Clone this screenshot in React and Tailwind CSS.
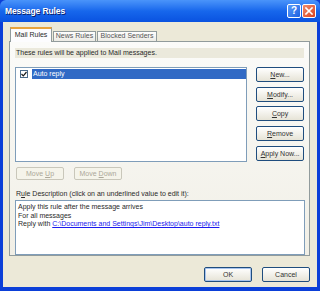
import React from 'react'

const XpButton = ({ children, disabled = false, className = '' }) => (
  <div
    className={`flex items-center justify-center rounded-[2px] border text-[7px] leading-none ${
      disabled
        ? 'border-[#c9c7ba] bg-[#f5f4ea] text-[#aca899]'
        : 'border-[#1f4d7e] bg-gradient-to-b from-[#ffffff] to-[#e6e3d6] text-[#333]'
    } ${className}`}
  >
    {children}
  </div>
)

const App = () => {
  const sideButtons = [
    { key: 'new', label: <><span className="underline">N</span>ew...</> },
    { key: 'modify', label: <><span className="underline">M</span>odify...</> },
    { key: 'copy', label: <><span className="underline">C</span>opy</> },
    { key: 'remove', label: <><span className="underline">R</span>emove</> },
    { key: 'apply', label: <><span className="underline">A</span>pply Now...</> }
  ]

  return (
    <div className="w-[320px] h-[291px] flex flex-col bg-[#0b3fd8] font-['Liberation_Sans',Arial,sans-serif] overflow-hidden">
      {/* title bar */}
      <div className="h-[22px] shrink-0 flex items-center pl-[5px] pr-[4px] bg-gradient-to-b from-[#4a94fa] via-[#1767ec] to-[#0a52e0] rounded-t-[6px]">
        <span className="text-white font-bold text-[8.5px] tracking-[-0.1px] [text-shadow:1px_1px_0_#0a1f6a]">Message Rules</span>
        <div className="ml-auto flex gap-[1px]">
          <div className="w-[14px] h-[14px] rounded-[2px] border border-white bg-gradient-to-br from-[#5b9cfb] to-[#1d5fe0] flex items-center justify-center text-white font-bold text-[10px] leading-none">?</div>
          <div className="w-[14px] h-[14px] rounded-[2px] border border-white bg-gradient-to-br from-[#f08a6a] to-[#d9421c] flex items-center justify-center">
            <svg width="8" height="8" viewBox="0 0 8 8">
              <path d="M1 1 L7 7 M7 1 L1 7" stroke="#fff" strokeWidth="1.6" strokeLinecap="square" />
            </svg>
          </div>
        </div>
      </div>

      {/* body */}
      <div className="flex-1 mx-[3px] mb-[4px] bg-[#ece9d8] flex flex-col pt-[5px] pl-[6px] pr-[7px] text-[#2a2a2a]">
        {/* tabs */}
        <div className="h-[14px] flex items-end pl-[1px] relative z-10">
          <div className="w-[42px] h-[15px] -mb-px bg-[#fcfcfe] border-x border-[#919b9c] border-t-2 border-t-[#e8a33c] flex items-center justify-center text-[7px]">Mail Rules</div>
          <div className="w-[43px] h-[10px] ml-[1px] bg-gradient-to-b from-[#fefefe] to-[#ecebe5] border-x border-t border-[#919b9c] flex items-center justify-center text-[7px] text-[#555]">News Rules</div>
          <div className="w-[60px] h-[10px] ml-[1px] bg-gradient-to-b from-[#fefefe] to-[#ecebe5] border-x border-t border-[#919b9c] flex items-center justify-center text-[7px] text-[#555]">Blocked Senders</div>
        </div>

        {/* tab panel */}
        <div className="h-[215px] border border-[#919b9c] bg-gradient-to-b from-[#fbfbf9] to-[#f1efe6] flex flex-col pl-[5px] pr-[5px] pt-[6px]">
          <div className="h-[10px] bg-[#ebe9dc] flex items-center pl-[1px] text-[7px]">These rules will be applied to Mail messages.</div>

          <div className="mt-[9px] flex gap-[9px]">
            <div className="w-[233px] h-[95px] border border-[#7f9db9] bg-white pt-[1px]">
              <div className="flex items-center h-[10px]">
                <div className="ml-[4px] w-[8px] h-[8px] border border-[#4a6a8a] bg-white flex items-center justify-center">
                  <svg width="6" height="6" viewBox="0 0 6 6">
                    <path d="M0.5 3 L2.3 4.8 L5.5 1" stroke="#1a1a1a" strokeWidth="1.2" fill="none" />
                  </svg>
                </div>
                <div className="ml-[4px] flex-1 h-[10px] bg-[#316ac5] text-white text-[7px] flex items-center pl-[1px]">Auto reply</div>
              </div>
            </div>
            <div className="w-[48px] flex flex-col gap-[4.7px]">
              {sideButtons.map((b) => (
                <XpButton key={b.key} className="h-[15px]">{b.label}</XpButton>
              ))}
            </div>
          </div>

          <div className="mt-[5px] flex gap-[10px] pl-[1px]">
            <XpButton disabled className="w-[48px] h-[13px]">Move <span className="underline ml-[2px]">U</span>p</XpButton>
            <XpButton disabled className="w-[48px] h-[13px]">Move <span className="underline ml-[2px]">D</span>own</XpButton>
          </div>

          <div className="mt-[9px] h-[10px] flex items-center pl-[1px] text-[7px]">R<span className="underline">u</span>le Description (click on an underlined value to edit it):</div>

          <div className="mt-[1px] w-[290px] h-[55px] border border-[#7f9db9] bg-white pl-[2px] pt-[2px] text-[7px] leading-[8.5px]">
            <div>Apply this rule after the message arrives</div>
            <div>For all messages</div>
            <div>Reply with <span className="text-[#1a1aee] underline">C:\Documents and Settings\Jim\Desktop\auto reply.txt</span></div>
          </div>
        </div>

        {/* footer */}
        <div className="mt-[11px] flex justify-end gap-[10px]">
          <XpButton className="w-[48px] h-[15px] shadow-[inset_0_0_0_1px_#a8c4ee]">OK</XpButton>
          <XpButton className="w-[48px] h-[15px]">Cancel</XpButton>
        </div>
      </div>
    </div>
  )
}

export default App
